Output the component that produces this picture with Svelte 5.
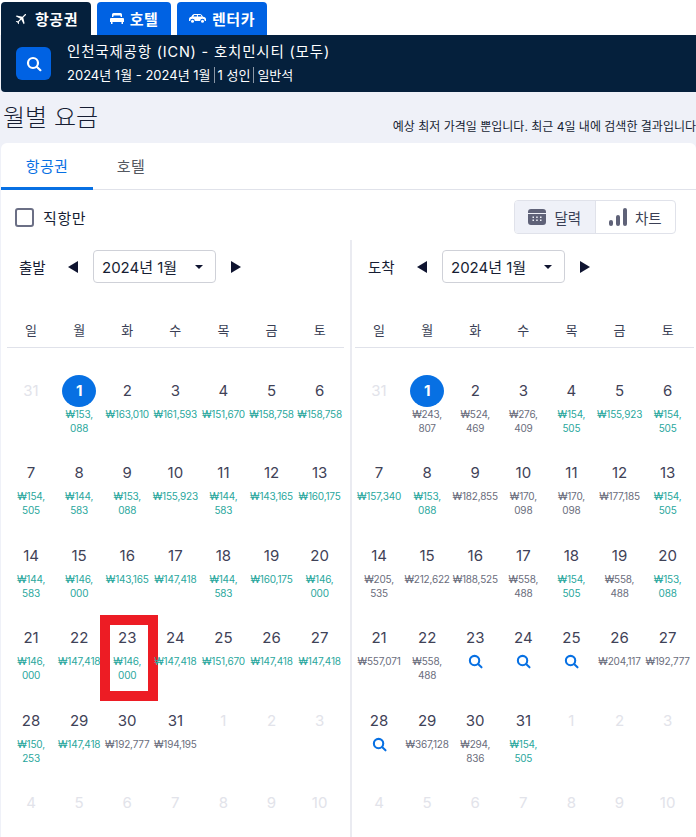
<script>
	const weekdays = ['일', '월', '화', '수', '목', '금', '토'];

	// price text: \n marks where the narrow cell wraps; search = no cached price
	const depart = [
		[31, null, 'off'], [1, '₩153,\n088', 'low', true], [2, '₩163,010', 'low'], [3, '₩161,593', 'low'], [4, '₩151,670', 'low'], [5, '₩158,758', 'low'], [6, '₩158,758', 'low'],
		[7, '₩154,\n505', 'low'], [8, '₩144,\n583', 'low'], [9, '₩153,\n088', 'low'], [10, '₩155,923', 'low'], [11, '₩144,\n583', 'low'], [12, '₩143,165', 'low'], [13, '₩160,175', 'low'],
		[14, '₩144,\n583', 'low'], [15, '₩146,\n000', 'low'], [16, '₩143,165', 'low'], [17, '₩147,418', 'low'], [18, '₩144,\n583', 'low'], [19, '₩160,175', 'low'], [20, '₩146,\n000', 'low'],
		[21, '₩146,\n000', 'low'], [22, '₩147,418', 'low'], [23, '₩146,\n000', 'low', false, true], [24, '₩147,418', 'low'], [25, '₩151,670', 'low'], [26, '₩147,418', 'low'], [27, '₩147,418', 'low'],
		[28, '₩150,\n253', 'low'], [29, '₩147,418', 'low'], [30, '₩192,777', 'mid'], [31, '₩194,195', 'mid'], [1, null, 'off'], [2, null, 'off'], [3, null, 'off'],
		[4, null, 'off'], [5, null, 'off'], [6, null, 'off'], [7, null, 'off'], [8, null, 'off'], [9, null, 'off'], [10, null, 'off']
	];

	const arrive = [
		[31, null, 'off'], [1, '₩243,\n807', 'mid', true], [2, '₩524,\n469', 'mid'], [3, '₩276,\n409', 'mid'], [4, '₩154,\n505', 'low'], [5, '₩155,923', 'low'], [6, '₩154,\n505', 'low'],
		[7, '₩157,340', 'low'], [8, '₩153,\n088', 'low'], [9, '₩182,855', 'mid'], [10, '₩170,\n098', 'mid'], [11, '₩170,\n098', 'mid'], [12, '₩177,185', 'mid'], [13, '₩154,\n505', 'low'],
		[14, '₩205,\n535', 'mid'], [15, '₩212,622', 'mid'], [16, '₩188,525', 'mid'], [17, '₩558,\n488', 'mid'], [18, '₩154,\n505', 'low'], [19, '₩558,\n488', 'mid'], [20, '₩153,\n088', 'low'],
		[21, '₩557,071', 'mid'], [22, '₩558,\n488', 'mid'], [23, 'search', 'search'], [24, 'search', 'search'], [25, 'search', 'search'], [26, '₩204,117', 'mid'], [27, '₩192,777', 'mid'],
		[28, 'search', 'search'], [29, '₩367,128', 'mid'], [30, '₩294,\n836', 'mid'], [31, '₩154,\n505', 'low'], [1, null, 'off'], [2, null, 'off'], [3, null, 'off'],
		[4, null, 'off'], [5, null, 'off'], [6, null, 'off'], [7, null, 'off'], [8, null, 'off'], [9, null, 'off'], [10, null, 'off']
	];

	const panes = [
		{ label: '출발', days: depart },
		{ label: '도착', days: arrive }
	];
</script>

{#snippet searchIcon(size)}
	<svg width={size} height={size} viewBox="0 0 16 16" fill="none" stroke="currentColor" stroke-width="2.2" stroke-linecap="round">
		<circle cx="7" cy="7" r="5" />
		<path d="M11 11l3.4 3.2" />
	</svg>
{/snippet}

<div class="page">
	<nav class="top-tabs">
		<div class="top-tab active">
			<svg width="15" height="15" viewBox="0 0 24 24" fill="currentColor"><path transform="rotate(45 12 12)" d="M21 16v-2l-8-5V3.500c0-.8-.5-1.500-1-1.500s-1 .7-1 1.500V9l-8 5v2l8-2.500V19l-2 1.500V22l3-1 3 1v-1.500L13 19v-5.500l8 2.500z" /></svg>
			<span>항공권</span>
		</div>
		<div class="top-tab">
			<svg width="14" height="11" viewBox="0 0 14 11" fill="currentColor"><path d="M3.500 0h7A1.500 1.500 0 0 1 12 1.500V4h-1.200l-.5-1.400H3.700L3.200 4H2V1.500A1.500 1.500 0 0 1 3.500 0z" /><path d="M1 5h12a1 1 0 0 1 1 1v3h-1v2h-1.500V9h-9v2H1V9H0V6a1 1 0 0 1 1-1z" /></svg>
			<span>호텔</span>
		</div>
		<div class="top-tab wide">
			<svg width="17" height="9" viewBox="0 0 17 9" fill="currentColor"><path d="M5.500 0h5c1 0 1.700.4 2.300 1.100L14 2.700c1.800.2 3 .9 3 2.300v2h-1.200a2.300 2.300 0 0 0-4.600 0H5.800a2.300 2.300 0 0 0-4.600 0H0V5c0-1.200 1-2 2.300-2.300L3.400 1.100C4 .4 4.700 0 5.500 0zM5.200 1 4.400 2.600h3.500V1H5.200zm3.700 0v1.600h3.700L11.700 1H8.900z" fill-rule="evenodd" /><circle cx="3.500" cy="7.200" r="1.500" /><circle cx="13.500" cy="7.200" r="1.500" /></svg>
			<span>렌터카</span>
		</div>
	</nav>

	<header class="summary">
		<div class="search-btn">{@render searchIcon(16)}</div>
		<div class="summary-text">
			<div class="route">인천국제공항 (ICN) - 호치민시티 (모두)</div>
			<div class="trip">
				<span>2024년 1월 - 2024년 1월</span>
				<span class="sep">1 성인</span>
				<span class="sep">일반석</span>
			</div>
		</div>
	</header>

	<div class="title-row">
		<h1>월별 요금</h1>
		<p>예상 최저 가격일 뿐입니다. 최근 4일 내에 검색한 결과입니다</p>
	</div>

	<main class="card">
		<div class="card-tabs">
			<div class="card-tab selected">항공권</div>
			<div class="card-tab">호텔</div>
		</div>

		<div class="filter-row">
			<label class="direct">
				<span class="checkbox"></span>
				직항만
			</label>
			<div class="segment">
				<div class="seg-item on">
					<svg width="18" height="16" viewBox="0 0 18 16" fill="currentColor"><path fill-rule="evenodd" d="M3 0h12a3 3 0 0 1 3 3v1H0V3a3 3 0 0 1 3-3zM0 5h18v8a3 3 0 0 1-3 3H3a3 3 0 0 1-3-3V5zM4.500 7.500v1.500H6V7.500H4.500zm3.700 0v1.500h1.500V7.500H8.200zm3.800 0v1.500h1.500V7.500H12zm-7.500 3v1.500H6v-1.500H4.500zm3.700 0v1.500h1.500v-1.500H8.200zm3.800 0v1.500h1.500v-1.500H12z" /></svg>
					<span>달력</span>
				</div>
				<div class="seg-item">
					<svg width="18" height="18" viewBox="0 0 18 18" fill="currentColor"><rect x="0" y="12" width="4" height="6" rx="2" /><rect x="7" y="7" width="4" height="11" rx="2" /><rect x="14" y="0" width="4" height="18" rx="2" /></svg>
					<span>차트</span>
				</div>
			</div>
		</div>

		<div class="calendars">
			{#each panes as pane}
				<section class="pane">
					<div class="month-row">
						<span class="pane-label">{pane.label}</span>
						<span class="arrow left"></span>
						<div class="month-select">
							<span>2024년 1월</span>
							<span class="caret"></span>
						</div>
						<span class="arrow right"></span>
					</div>

					<div class="week">
						{#each weekdays as wd}
							<div>{wd}</div>
						{/each}
					</div>

					<div class="days">
						{#each pane.days as [num, price, kind, picked, marked]}
							<div class="day">
								<div class="num" class:off={kind === 'off'} class:picked>{num}</div>
								{#if kind === 'search'}
									<div class="find">{@render searchIcon(15)}</div>
								{:else if price}
									<div class="price {kind}">{price}</div>
								{/if}
								{#if marked}
									<div class="red-box"></div>
								{/if}
							</div>
						{/each}
					</div>
				</section>
			{/each}
		</div>
	</main>
</div>

<style>
	:global(body) {
		background: #eff1f8;
	}

	.page {
		height: 837px;
		overflow: hidden;
		font-family: Inter, 'Noto Sans CJK KR', sans-serif;
		color: #161616;
	}

	.top-tabs {
		display: flex;
		gap: 6px;
		height: 35px;
		padding: 2px 0 0 1px;
		box-sizing: border-box;
		background: #fff;
	}

	.top-tab {
		display: flex;
		align-items: center;
		justify-content: center;
		gap: 6px;
		width: 74px;
		box-sizing: border-box;
		background: #0062e3;
		color: #fff;
		font-size: 15px;
		font-weight: 700;
		letter-spacing: 0.5px;
		border-radius: 4px 4px 0 0;
	}

	.top-tab.active {
		width: 90px;
		background: #05203c;
	}

	.top-tab.wide {
		width: 90px;
	}

	.summary {
		display: flex;
		align-items: center;
		gap: 16px;
		height: 57px;
		margin-left: 1px;
		padding-left: 15px;
		background: #05203c;
		color: #fff;
		border-radius: 0 0 0 4px;
	}

	.search-btn {
		display: flex;
		align-items: center;
		justify-content: center;
		width: 35px;
		height: 33px;
		background: #0062e3;
		border-radius: 6px;
	}

	.route {
		font-size: 14.5px;
		line-height: 20px;
		letter-spacing: 0.8px;
		margin-top: -3px;
	}

	.trip {
		display: flex;
		margin-top: 5px;
		font-size: 13px;
		line-height: 16px;
	}

	.sep {
		margin-left: 3px;
		padding-left: 3px;
		border-left: 1px solid #8a96a6;
	}

	.title-row {
		display: flex;
		align-items: flex-end;
		justify-content: space-between;
		height: 51px;
		padding: 0 0 9px 3px;
		box-sizing: border-box;
		white-space: nowrap;
	}

	h1 {
		margin: 0;
		font-size: 24px;
		font-weight: 300;
		line-height: 32px;
		color: #161d33;
	}

	.title-row p {
		margin: 0;
		font-size: 12px;
		line-height: 14px;
		color: #161d33;
	}

	.card {
		margin-left: 1px;
		background: #fff;
		border-radius: 6px 6px 0 0;
		height: 694px;
		overflow: hidden;
	}

	.card-tabs {
		display: flex;
		height: 47px;
		border-bottom: 1px solid #e0e2ea;
		box-sizing: border-box;
	}

	.card-tab {
		display: flex;
		align-items: center;
		justify-content: center;
		width: 92px;
		font-size: 15px;
		letter-spacing: 0.4px;
		color: #545860;
		margin-bottom: -1px;
		padding-bottom: 3px;
		box-sizing: border-box;
	}

	.card-tab + .card-tab {
		width: 76px;
	}

	.card-tab.selected {
		color: #0770e3;
		border-bottom: 3px solid #0770e3;
		padding-bottom: 0;
	}

	.filter-row {
		display: flex;
		align-items: center;
		justify-content: space-between;
		height: 50px;
		padding: 4px 20px 0 14px;
		box-sizing: border-box;
	}

	.direct {
		display: flex;
		align-items: center;
		gap: 9px;
		font-size: 15px;
		letter-spacing: 0.6px;
		color: #161d33;
	}

	.checkbox {
		width: 15px;
		height: 15px;
		border: 2px solid #6b6f85;
		border-radius: 3px;
	}

	.segment {
		display: flex;
		height: 34px;
		border: 1px solid #e0e2ea;
		border-radius: 4px;
		box-sizing: border-box;
		overflow: hidden;
		font-size: 14.5px;
		color: #3a3f55;
	}

	.seg-item {
		display: flex;
		align-items: center;
		justify-content: center;
		gap: 8px;
		width: 79.5px;
	}

	.seg-item svg {
		color: #5f6278;
	}

	.seg-item.on {
		background: #eff1f8;
		border-right: 1px solid #e0e2ea;
	}

	.calendars {
		display: grid;
		grid-template-columns: 349px 1fr;
	}

	.pane {
		padding: 10px 0 0 6px;
	}

	.pane + .pane {
		padding-left: 3px;
		border-left: 2px solid #eaebf1;
		height: 600px;
	}

	.month-row {
		display: flex;
		align-items: center;
		height: 33px;
		font-size: 14.5px;
		color: #161d33;
	}

	.pane-label {
		width: 28px;
		margin: 0 21px 0 12px;
		white-space: nowrap;
	}

	.pane + .pane .pane-label {
		margin-left: 13px;
	}

	.arrow {
		width: 0;
		height: 0;
		border-top: 6.5px solid transparent;
		border-bottom: 6.5px solid transparent;
	}

	.arrow.left {
		border-right: 10px solid #0f1430;
		margin-right: 15px;
	}

	.arrow.right {
		border-left: 10px solid #0f1430;
		margin-left: 15px;
	}

	.month-select {
		display: flex;
		align-items: center;
		justify-content: space-between;
		width: 123px;
		height: 33px;
		padding: 0 12px 0 8px;
		box-sizing: border-box;
		border: 1px solid #cfd1d8;
		border-radius: 4px;
		font-size: 15px;
	}

	.caret {
		width: 0;
		height: 0;
		border-left: 4.5px solid transparent;
		border-right: 4.5px solid transparent;
		border-top: 4.5px solid #0f1430;
	}

	.week {
		display: grid;
		grid-template-columns: repeat(7, 48.1px);
		width: 337px;
		height: 32px;
		box-sizing: border-box;
		margin-top: 33px;
		padding-top: 7px;
		border-bottom: 1px solid #e0e2ea;
		font-size: 13px;
		color: #3a3f55;
		text-align: center;
		line-height: 14px;
	}

	.pane + .pane .week {
		width: 339px;
	}

	.days {
		display: grid;
		grid-template-columns: repeat(7, 48.1px);
		grid-auto-rows: 82.4px;
		margin-top: 27px;
	}

	.day {
		position: relative;
		display: flex;
		flex-direction: column;
		align-items: center;
	}

	.num {
		width: 34px;
		height: 32px;
		border-radius: 50%;
		text-align: center;
		font-size: 15px;
		line-height: 32px;
		color: #3f4257;
	}

	.num.off {
		color: #e2e3ea;
	}

	.num.picked {
		background: #0770e3;
		color: #fff;
		font-weight: 700;
	}

	.price {
		font-size: 10px;
		line-height: 14px;
		letter-spacing: -0.2px;
		text-align: center;
		white-space: pre-line;
	}

	.price.low {
		color: #2aa79d;
	}

	.price.mid {
		color: #6a6d7c;
	}

	.find {
		display: flex;
		color: #0770e3;
	}

	/* annotation drawn on top of the screenshot */
	.red-box {
		position: absolute;
		left: -3px;
		top: -7px;
		width: 38px;
		height: 66px;
		border: 10px solid #ed1c24;
		pointer-events: none;
	}
</style>
